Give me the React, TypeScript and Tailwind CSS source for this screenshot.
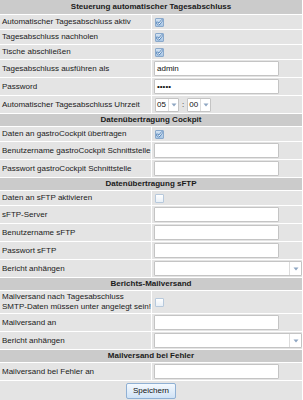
import React from "react";

const ROW_BG = "bg-[#e4e4e4]";

function Check({ checked }: { checked?: boolean }) {
  return (
    <span
      className={
        "w-[9px] h-[9px] border flex items-center justify-center rounded-[1px] " +
        (checked
          ? "border-[#8aa9cb] bg-gradient-to-b from-[#d3e3f3] to-[#a9c6e4]"
          : "border-[#b7c9dc] bg-gradient-to-b from-[#ffffff] to-[#e9f0f7]")
      }
    >
      {checked && (
        <svg width="7" height="7" viewBox="0 0 7 7">
          <path d="M1 3.6 L2.8 5.3 L6 1.4" fill="none" stroke="#4d7fb6" strokeWidth="2.2" strokeLinecap="round" strokeLinejoin="round" />
          <path d="M1 3.6 L2.8 5.3 L6 1.4" fill="none" stroke="#ffffff" strokeWidth="1" strokeLinecap="round" strokeLinejoin="round" />
        </svg>
      )}
    </span>
  );
}

function TextInput({ value }: { value?: string }) {
  return (
    <div className="w-[125px] h-[15px] bg-white border border-[#c4c4c4] rounded-[1px] flex items-center pl-[2px] text-[8px] text-[#111]">
      {value}
    </div>
  );
}

function Arrow() {
  return (
    <svg width="6" height="4" viewBox="0 0 6 4">
      <path d="M0.5 0.5 L5.5 0.5 L3 3.5 Z" fill="#8ea6c2" />
    </svg>
  );
}

function SmallSelect({ value }: { value: string }) {
  return (
    <div className="w-[24px] h-[14px] bg-white border border-[#c4c4c4] rounded-[1px] flex items-stretch text-[8px] text-[#111]">
      <div className="flex-1 flex items-center pl-[1px]">{value}</div>
      <div className="w-[10px] border-l border-[#dcdcdc] flex items-center justify-center">
        <Arrow />
      </div>
    </div>
  );
}

function WideSelect() {
  return (
    <div className="w-[148px] h-[15px] bg-white border border-[#c4c4c4] rounded-[1px] flex items-stretch">
      <div className="flex-1" />
      <div className="w-[12px] border-l border-[#dcdcdc] flex items-center justify-center">
        <Arrow />
      </div>
    </div>
  );
}

function Header({ title, h = "h-[12px]" }: { title: string; h?: string }) {
  return (
    <div className={`${h} bg-[#cbcbcb] flex items-center justify-center font-bold text-[8px] text-[#1a1a1a]`}>
      {title}
    </div>
  );
}

function Row({ label, children, h = "h-[17px]" }: { label: React.ReactNode; children?: React.ReactNode; h?: string }) {
  return (
    <div className={`grid grid-cols-[151px_1fr] gap-px ${h}`}>
      <div className={`${ROW_BG} flex items-center pl-[2px] leading-[10px]`}>{label}</div>
      <div className={`${ROW_BG} flex items-center pl-[2px]`}>{children}</div>
    </div>
  );
}

export default function App() {
  return (
    <div className="w-[303px] h-[400px] bg-white font-['Liberation_Sans',Arial,sans-serif] text-[8px] text-[#1a1a1a] overflow-hidden">
      <div className="w-[302px] flex flex-col gap-px">
        <Header title="Steuerung automatischer Tagesabschluss" h="h-[14px]" />
        <Row label="Automatischer Tagesabschluss aktiv" h="h-[14px]">
          <span className="ml-px"><Check checked /></span>
        </Row>
        <Row label="Tagesabschluss nachholen" h="h-[14px]">
          <span className="ml-px"><Check checked /></span>
        </Row>
        <Row label="Tische abschließen" h="h-[14px]">
          <span className="ml-px"><Check checked /></span>
        </Row>
        <Row label="Tagesabschluss ausführen als">
          <TextInput value="admin" />
        </Row>
        <Row label="Password">
          <TextInput value="•••••" />
        </Row>
        <Row label="Automatischer Tagesabschluss Uhrzeit">
          <div className="flex items-center ml-px">
            <SmallSelect value="05" />
            <span className="mx-[3px] text-[8px]">:</span>
            <SmallSelect value="00" />
          </div>
        </Row>

        <Header title="Datenübertragung Cockpit" />
        <Row label="Daten an gastroCockpit übertragen" h="h-[14px]">
          <span className="ml-px"><Check checked /></span>
        </Row>
        <Row label="Benutzername gastroCockpit Schnittstelle">
          <TextInput />
        </Row>
        <Row label="Passwort gastroCockpit Schnittstelle">
          <TextInput />
        </Row>

        <Header title="Datenübertragung sFTP" />
        <Row label="Daten an sFTP aktivieren" h="h-[14px]">
          <span className="ml-px"><Check /></span>
        </Row>
        <Row label="sFTP-Server">
          <TextInput />
        </Row>
        <Row label="Benutzername sFTP">
          <TextInput />
        </Row>
        <Row label="Passwort sFTP">
          <TextInput />
        </Row>
        <Row label="Bericht anhängen">
          <WideSelect />
        </Row>

        <Header title="Berichts-Mailversand" />
        <Row
          h="h-[22px]"
          label={
            <div className="flex flex-col">
              <span>Mailversand nach Tagesabschluss</span>
              <span>SMTP-Daten müssen unter angelegt sein!</span>
            </div>
          }
        >
          <span className="ml-px"><Check /></span>
        </Row>
        <Row label="Mailversand an">
          <TextInput />
        </Row>
        <Row label="Bericht anhängen">
          <WideSelect />
        </Row>

        <Header title="Mailversand bei Fehler" />
        <Row label="Mailversand bei Fehler an">
          <TextInput />
        </Row>

        <div className={`${ROW_BG} h-[19px] flex items-center justify-center`}>
          <button className="h-[16px] w-[50px] rounded-[2px] border border-[#8fb0d4] bg-gradient-to-b from-[#f4f9fe] to-[#cfe2f5] text-[8px] text-[#111] font-['Liberation_Sans',Arial,sans-serif] flex items-center justify-center">
            Speichern
          </button>
        </div>
      </div>
    </div>
  );
}
